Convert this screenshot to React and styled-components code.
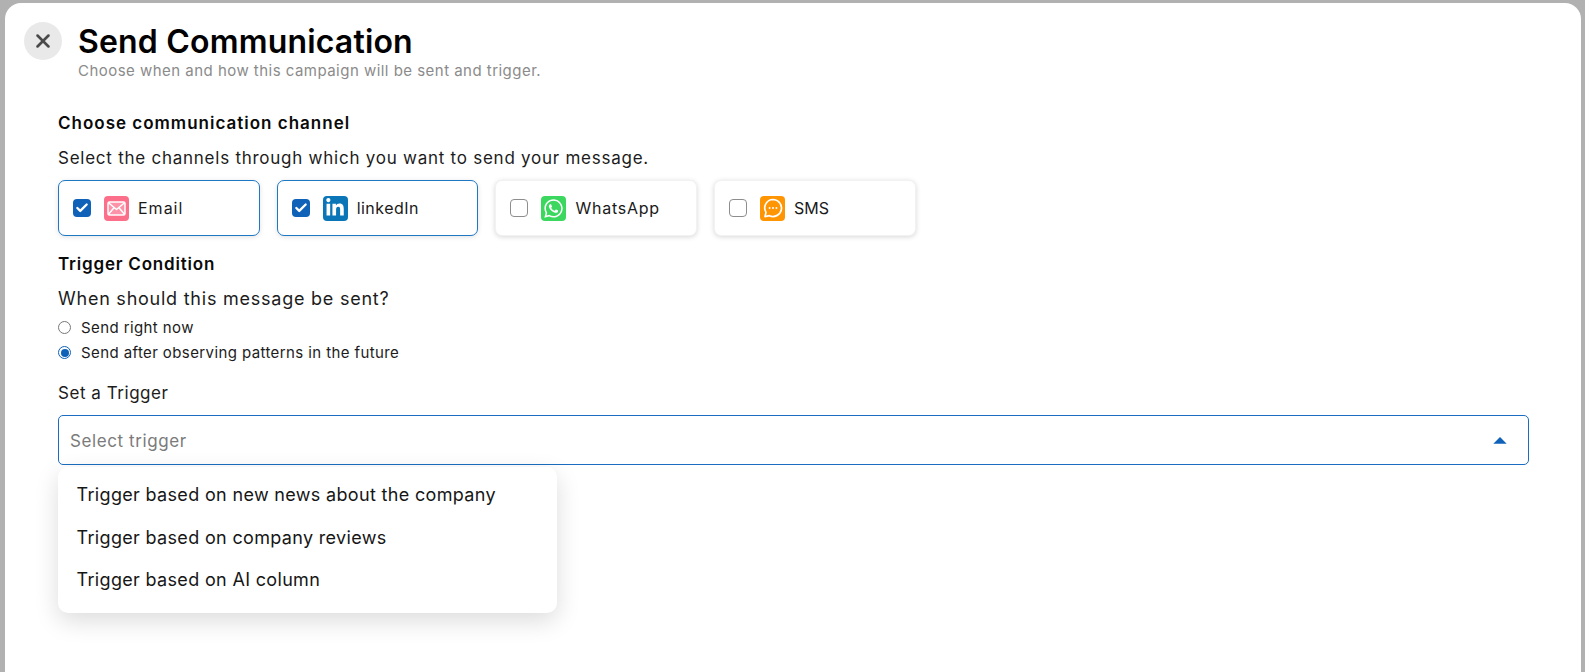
import React from "react";
import styled, { createGlobalStyle } from "styled-components";
import { MdArrowDropUp } from "react-icons/md";
import { FaLinkedinIn, FaWhatsapp } from "react-icons/fa";
import { X, Check } from "lucide-react";

const Global = createGlobalStyle`
  html, body { margin: 0; height: 672px; overflow: hidden; background: #b1b1b1; }
  * { box-sizing: border-box; }
  body { font-family: Inter, "Liberation Sans", sans-serif; color: #111; }
`;

const Panel = styled.div`
  margin: 3px 4px 0 5px;
  height: 669px;
  background: #fff;
  border-radius: 16px 16px 0 0;
  padding: 18px 52px 0 53px;
`;

const Header = styled.header`
  display: flex;
  align-items: flex-start;
  gap: 16px;
  margin-left: -34px;
`;

const CloseButton = styled.div`
  width: 38px;
  height: 38px;
  border-radius: 50%;
  background: #e9e9e9;
  color: #4a4a4a;
  display: flex;
  align-items: center;
  justify-content: center;
  margin-top: 1px;
`;

const Titles = styled.div`
  display: flex;
  flex-direction: column;
  margin-top: 1px;
`;

const Title = styled.h1`
  margin: 0;
  font-size: 32px;
  line-height: 39px;
  font-weight: 600;
  color: #000;
  letter-spacing: 0.18px;
`;

const Subtitle = styled.p`
  margin: 0;
  font-size: 15px;
  line-height: 19px;
  color: #8b8b8b;
  letter-spacing: 0.47px;
`;

const SectionTitle = styled.h2`
  margin: ${(p) => p.$top}px 0 0;
  font-size: 17px;
  line-height: 24px;
  font-weight: 600;
  color: #0a0a0a;
  letter-spacing: ${(p) => p.$spacing}px;
`;

const Prompt = styled.p`
  margin: ${(p) => p.$top}px 0 0;
  font-size: ${(p) => p.$size}px;
  line-height: 24px;
  color: #1c1c1c;
  letter-spacing: ${(p) => p.$spacing}px;
`;

const Channels = styled.div`
  display: flex;
  gap: 17px;
  margin-top: 10px;
`;

const ChannelCard = styled.div`
  width: 201.7px;
  height: 56px;
  display: flex;
  align-items: center;
  padding-left: 14px;
  border-radius: 7px;
  background: #fff;
  border: ${(p) => (p.$checked ? "1.5px solid #1f78c4" : "1px solid #f2f2f2")};
  box-shadow: 0 1px 5px rgba(0, 0, 0, ${(p) => (p.$checked ? 0.12 : 0.16)});
`;

const CheckBox = styled.span`
  width: 18px;
  height: 18px;
  flex: none;
  border-radius: 4px;
  display: flex;
  align-items: center;
  justify-content: center;
  color: #fff;
  background: ${(p) => (p.$checked ? "#0f62b8" : "#fff")};
  border: ${(p) => (p.$checked ? "none" : "1.5px solid #8d8d8d")};
`;

const ChannelIcon = styled.span`
  width: 25px;
  height: 25px;
  flex: none;
  margin-left: 13px;
  border-radius: 4px;
  background: ${(p) => p.$bg};
  color: #fff;
  display: flex;
  align-items: center;
  justify-content: center;
  font-size: ${(p) => p.$size || 18}px;
`;

const ChannelName = styled.span`
  margin-left: 9px;
  font-size: 16px;
  color: #1a1a1a;
  letter-spacing: ${(p) => p.$spacing}px;
`;

const RadioRow = styled.label`
  display: flex;
  align-items: center;
  gap: 10px;
  height: 25px;
  font-size: 15px;
  color: #1c1c1c;
  letter-spacing: 0.4px;
`;

const RadioGroup = styled.div`
  margin-top: 4px;
  display: flex;
  flex-direction: column;
`;

const RadioDot = styled.span`
  width: 13px;
  height: 13px;
  border-radius: 50%;
  flex: none;
  border: 1.2px solid ${(p) => (p.$on ? "#0f62b8" : "#777")};
  display: flex;
  align-items: center;
  justify-content: center;
  &::after {
    content: "";
    width: 8px;
    height: 8px;
    border-radius: 50%;
    background: ${(p) => (p.$on ? "#0f62b8" : "transparent")};
  }
`;

const SelectWrap = styled.div`
  position: relative;
  margin-top: 10px;
`;

const SelectBox = styled.div`
  height: 50px;
  border: 1.5px solid #1a6dbf;
  border-radius: 5px;
  display: flex;
  align-items: center;
  justify-content: space-between;
  padding: 1px 12px 0 11px;
  font-size: 17px;
  color: #7b7b7b;
  letter-spacing: 0.6px;
`;

const Caret = styled.span`
  color: #0f62b8;
  font-size: 32px;
  display: flex;
  align-items: center;
`;

const Menu = styled.ul`
  position: absolute;
  top: 52px;
  left: 0;
  width: 499px;
  height: 146px;
  margin: 0;
  padding: 6.5px 0;
  list-style: none;
  background: #fff;
  border-radius: 10px;
  box-shadow: 0 8px 24px rgba(0, 0, 0, 0.14);
`;

const MenuItem = styled.li`
  height: 42.5px;
  display: flex;
  align-items: center;
  padding-left: 18.5px;
  font-size: 18px;
  color: #161616;
  letter-spacing: 0.33px;
`;

const MailGlyph = () => (
  <svg width="19" height="15" viewBox="0 0 19 15" fill="rgba(255,255,255,0.25)" stroke="#fff" strokeWidth="1.5" strokeLinejoin="round">
    <rect x="1" y="1" width="17" height="13" rx="1.5" />
    <path d="M1.5 1.8 9.5 8.5 17.5 1.8M1.5 13.2 7 6.8M17.5 13.2 12 6.8" fill="none" />
  </svg>
);

const ChatGlyph = () => (
  <svg width="20" height="20" viewBox="0 0 20 20" fill="none">
    <path d="M10 1.5a8.5 8.5 0 1 1-3.6 16.2L2 18.6l1-4.2A8.5 8.5 0 0 1 10 1.5Z" stroke="#fff" strokeWidth="1.7" strokeLinejoin="round" />
    <circle cx="6.6" cy="10" r="1" fill="#fff" />
    <circle cx="10" cy="10" r="1" fill="#fff" />
    <circle cx="13.4" cy="10" r="1" fill="#fff" />
  </svg>
);

const channels = [
  { name: "Email", checked: true, bg: "#fb6f8b", spacing: 1, icon: <MailGlyph /> },
  { name: "linkedIn", checked: true, bg: "#0a76b8", spacing: 0.46, size: 20, icon: <FaLinkedinIn /> },
  { name: "WhatsApp", checked: false, bg: "#3cd75f", spacing: 0.77, size: 21, icon: <FaWhatsapp /> },
  { name: "SMS", checked: false, bg: "#ff9502", spacing: 0, icon: <ChatGlyph /> },
];

const triggers = [
  "Trigger based on new news about the company",
  "Trigger based on company reviews",
  "Trigger based on AI column",
];

export default function App() {
  return (
    <>
      <Global />
      <Panel>
        <Header>
          <CloseButton><X size={22} strokeWidth={2.8} /></CloseButton>
          <Titles>
            <Title>Send Communication</Title>
            <Subtitle>Choose when and how this campaign will be sent and trigger.</Subtitle>
          </Titles>
        </Header>

        <SectionTitle $top={31} $spacing={1}>Choose communication channel</SectionTitle>
        <Prompt $top={11} $size={17} $spacing={0.75}>Select the channels through which you want to send your message.</Prompt>
        <Channels>
          {channels.map((c) => (
            <ChannelCard key={c.name} $checked={c.checked}>
              <CheckBox $checked={c.checked}>{c.checked && <Check size={14} strokeWidth={4} />}</CheckBox>
              <ChannelIcon $bg={c.bg} $size={c.size}>{c.icon}</ChannelIcon>
              <ChannelName $spacing={c.spacing}>{c.name}</ChannelName>
            </ChannelCard>
          ))}
        </Channels>

        <SectionTitle $top={16} $spacing={0.8}>Trigger Condition</SectionTitle>
        <Prompt $top={11} $size={18} $spacing={0.76}>When should this message be sent?</Prompt>
        <RadioGroup>
          <RadioRow><RadioDot />Send right now</RadioRow>
          <RadioRow><RadioDot $on />Send after observing patterns in the future</RadioRow>
        </RadioGroup>
        <Prompt $top={16} $size={17} $spacing={0.54}>Set a Trigger</Prompt>
        <SelectWrap>
          <SelectBox>
            Select trigger
            <Caret><MdArrowDropUp /></Caret>
          </SelectBox>
          <Menu>
            {triggers.map((t) => <MenuItem key={t}>{t}</MenuItem>)}
          </Menu>
        </SelectWrap>
      </Panel>
    </>
  );
}
